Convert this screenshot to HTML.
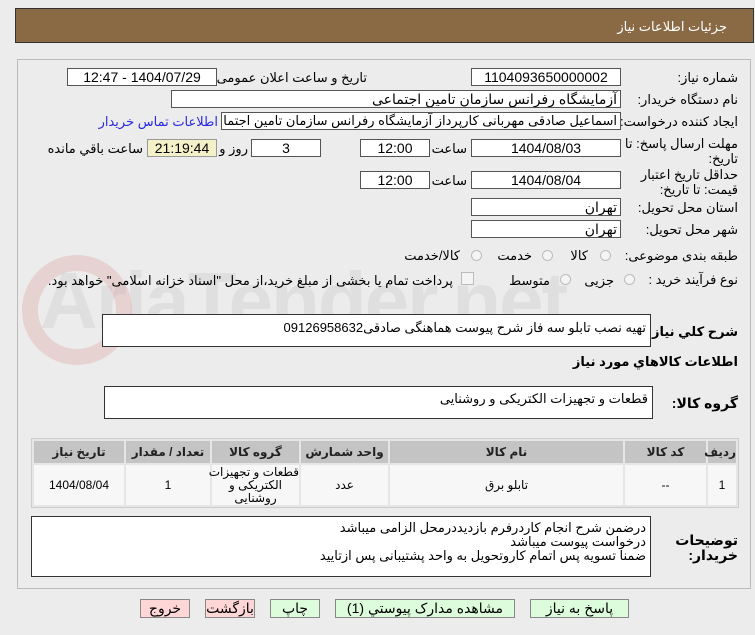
<!DOCTYPE html>
<html><head><meta charset="utf-8"><style>
body{margin:0;width:755px;height:635px;background:#ececec;font-family:"Liberation Sans","DejaVu Sans",sans-serif;font-size:13px;color:#000;position:relative;overflow:hidden;direction:rtl}
.a{position:absolute;white-space:nowrap}
.in{position:absolute;background:#fff;border:1px solid #555;box-sizing:border-box;text-align:center;line-height:16px;font-size:14px;overflow:hidden;white-space:nowrap}
.r{text-align:right;padding-right:3px}
.lbl{position:absolute;white-space:nowrap;text-align:right;line-height:15px}
.rad{position:absolute;width:11px;height:11px;border-radius:50%;border:1px solid #bbb;background:#f4f4f4;box-sizing:border-box}
.ta{position:absolute;background:#fff;border:1px solid #333;box-sizing:border-box;text-align:right;padding:3px 4px;line-height:14px}
.btn{position:absolute;top:599px;height:19px;border:1px solid #888;box-sizing:border-box;text-align:center;line-height:17px;font-size:14px}
table{position:absolute;left:31px;top:438px;width:708px;border-collapse:separate;border-spacing:2px;background:#e6e6e6;border:1px solid #ccc;direction:rtl;table-layout:fixed}
th{background:#c4c4c4;height:22px;font-size:12px;font-weight:bold;color:#222;padding:0}
td{background:#f7f7f7;height:40px;text-align:center;font-size:12px;line-height:13px;padding:0;white-space:nowrap}
</style></head><body>
<div class="a" style="left:15px;top:8px;width:739px;height:35px;background:#8a6a45;border:1px solid #333;box-sizing:border-box"></div>
<div class="a" style="right:28px;top:19px;color:#fff;font-size:13px">جزئیات اطلاعات نیاز</div>
<div class="a" style="left:17px;top:59px;width:734px;height:530px;border:1px solid #bbb;box-sizing:border-box;background:#ececec"></div>
<div class="a" style="left:40px;top:255px;font-size:80px;font-weight:bold;color:rgba(200,200,200,0.35);direction:ltr;letter-spacing:-2px">AriaTender.net</div>
<div class="a" style="left:22px;top:255px;width:110px;height:110px;border:16px solid rgba(220,150,150,0.3);border-radius:50%;box-sizing:border-box"></div>

<div class="lbl" style="right:17px;top:70px">شماره نیاز:</div>
<div class="in" style="left:471px;top:68px;width:150px;height:18px">1104093650000002</div>
<div class="lbl" style="right:388px;top:70px">تاریخ و ساعت اعلان عمومی:</div>
<div class="in" style="left:67px;top:68px;width:150px;height:18px">1404/07/29 - 12:47</div>

<div class="lbl" style="right:17px;top:92px">نام دستگاه خریدار:</div>
<div class="in r" style="left:171px;top:90px;width:450px;height:18px">آزمایشگاه رفرانس سازمان تامین اجتماعی</div>

<div class="lbl" style="right:17px;top:114px">ایجاد کننده درخواست:</div>
<div class="in r" style="left:221px;top:112px;width:400px;height:18px;font-size:13px">اسماعیل صادقی مهربانی کارپرداز آزمایشگاه رفرانس سازمان تامین اجتماعی</div>
<div class="lbl" style="right:537px;top:114px;color:#2a2ae0">اطلاعات تماس خریدار</div>

<div class="lbl" style="right:17px;top:136px">مهلت ارسال پاسخ: تا<br>تاریخ:</div>
<div class="in" style="left:471px;top:139px;width:150px;height:18px">1404/08/03</div>
<div class="lbl" style="right:288px;top:141px">ساعت</div>
<div class="in" style="left:360px;top:139px;width:70px;height:18px">12:00</div>
<div class="in" style="left:251px;top:139px;width:70px;height:18px">3</div>
<div class="lbl" style="right:507px;top:141px">روز و</div>
<div class="in" style="left:147px;top:139px;width:70px;height:18px;background:#f4f0c8;border-color:#999">21:19:44</div>
<div class="lbl" style="right:612px;top:141px">ساعت باقي مانده</div>

<div class="lbl" style="right:17px;top:167px">حداقل تاریخ اعتبار<br>قیمت: تا تاریخ:</div>
<div class="in" style="left:471px;top:171px;width:150px;height:18px">1404/08/04</div>
<div class="lbl" style="right:288px;top:173px">ساعت</div>
<div class="in" style="left:360px;top:171px;width:70px;height:18px">12:00</div>

<div class="lbl" style="right:17px;top:200px">استان محل تحویل:</div>
<div class="in r" style="left:471px;top:198px;width:150px;height:18px">تهران</div>
<div class="lbl" style="right:17px;top:222px">شهر محل تحویل:</div>
<div class="in r" style="left:471px;top:220px;width:150px;height:18px">تهران</div>

<div class="lbl" style="right:17px;top:248px">طبقه بندی موضوعی:</div>
<div class="rad" style="left:600px;top:250px"></div><div class="lbl" style="right:167px;top:248px">کالا</div>
<div class="rad" style="left:542px;top:250px"></div><div class="lbl" style="right:223px;top:248px">خدمت</div>
<div class="rad" style="left:471px;top:250px"></div><div class="lbl" style="right:295px;top:248px">کالا/خدمت</div>

<div class="lbl" style="right:17px;top:272px">نوع فرآیند خرید :</div>
<div class="rad" style="left:624px;top:274px"></div><div class="lbl" style="right:141px;top:273px">جزیی</div>
<div class="rad" style="left:560px;top:274px"></div><div class="lbl" style="right:205px;top:273px">متوسط</div>
<div class="a" style="left:461px;top:272px;width:11px;height:11px;border:1px solid #bbb;background:#f4f4f4"></div>
<div class="lbl" style="right:302px;top:273px">پرداخت تمام یا بخشی از مبلغ خرید،از محل "اسناد خزانه اسلامی" خواهد بود.</div>

<div class="lbl" style="right:17px;top:324px;font-weight:bold">شرح کلي نياز:</div>
<div class="ta" style="left:102px;top:314px;width:549px;height:33px;line-height:20px">تهیه نصب تابلو سه فاز شرح پیوست هماهنگی صادقی09126958632</div>
<div class="lbl" style="right:17px;top:354px;font-weight:bold">اطلاعات کالاهاي مورد نياز</div>
<div class="lbl" style="right:17px;top:396px;font-weight:bold;font-size:14px">گروه کالا:</div>
<div class="ta" style="left:104px;top:386px;width:549px;height:33px;line-height:18px">قطعات و تجهیزات الکتریکی و روشنایی</div>

<table>
<colgroup><col style="width:28px"><col style="width:81px"><col style="width:233px"><col style="width:87px"><col style="width:87px"><col style="width:84px"><col></colgroup>
<tr><th>رديف</th><th>کد کالا</th><th>نام کالا</th><th>واحد شمارش</th><th>گروه کالا</th><th>تعداد / مقدار</th><th>تاريخ نياز</th></tr>
<tr><td>1</td><td>--</td><td>تابلو برق</td><td>عدد</td><td>قطعات و تجهیزات<br>الکتریکی و<br>روشنایی</td><td>1</td><td>1404/08/04</td></tr>
</table>

<div class="lbl" style="right:17px;top:533px;font-weight:bold;font-size:14px">توضیحات<br>خریدار:</div>
<div class="ta" style="left:31px;top:516px;width:620px;height:61px;padding-top:4px">درضمن شرح انجام کاردرفرم بازدیددرمحل الزامی میباشد<br>درخواست پیوست میباشد<br>ضمنا تسویه پس اتمام کاروتحویل به واحد پشتیبانی پس ازتایید</div>

<div class="btn" style="left:140px;width:50px;background:#ffd6d6">خروج</div>
<div class="btn" style="left:205px;width:50px;background:#ffd6d6">بازگشت</div>
<div class="btn" style="left:270px;width:50px;background:#dcfcdc">چاپ</div>
<div class="btn" style="left:335px;width:180px;background:#dcfcdc">مشاهده مدارک پیوستي (1)</div>
<div class="btn" style="left:530px;width:99px;background:#dcfcdc">پاسخ به نياز</div>
</body></html>
